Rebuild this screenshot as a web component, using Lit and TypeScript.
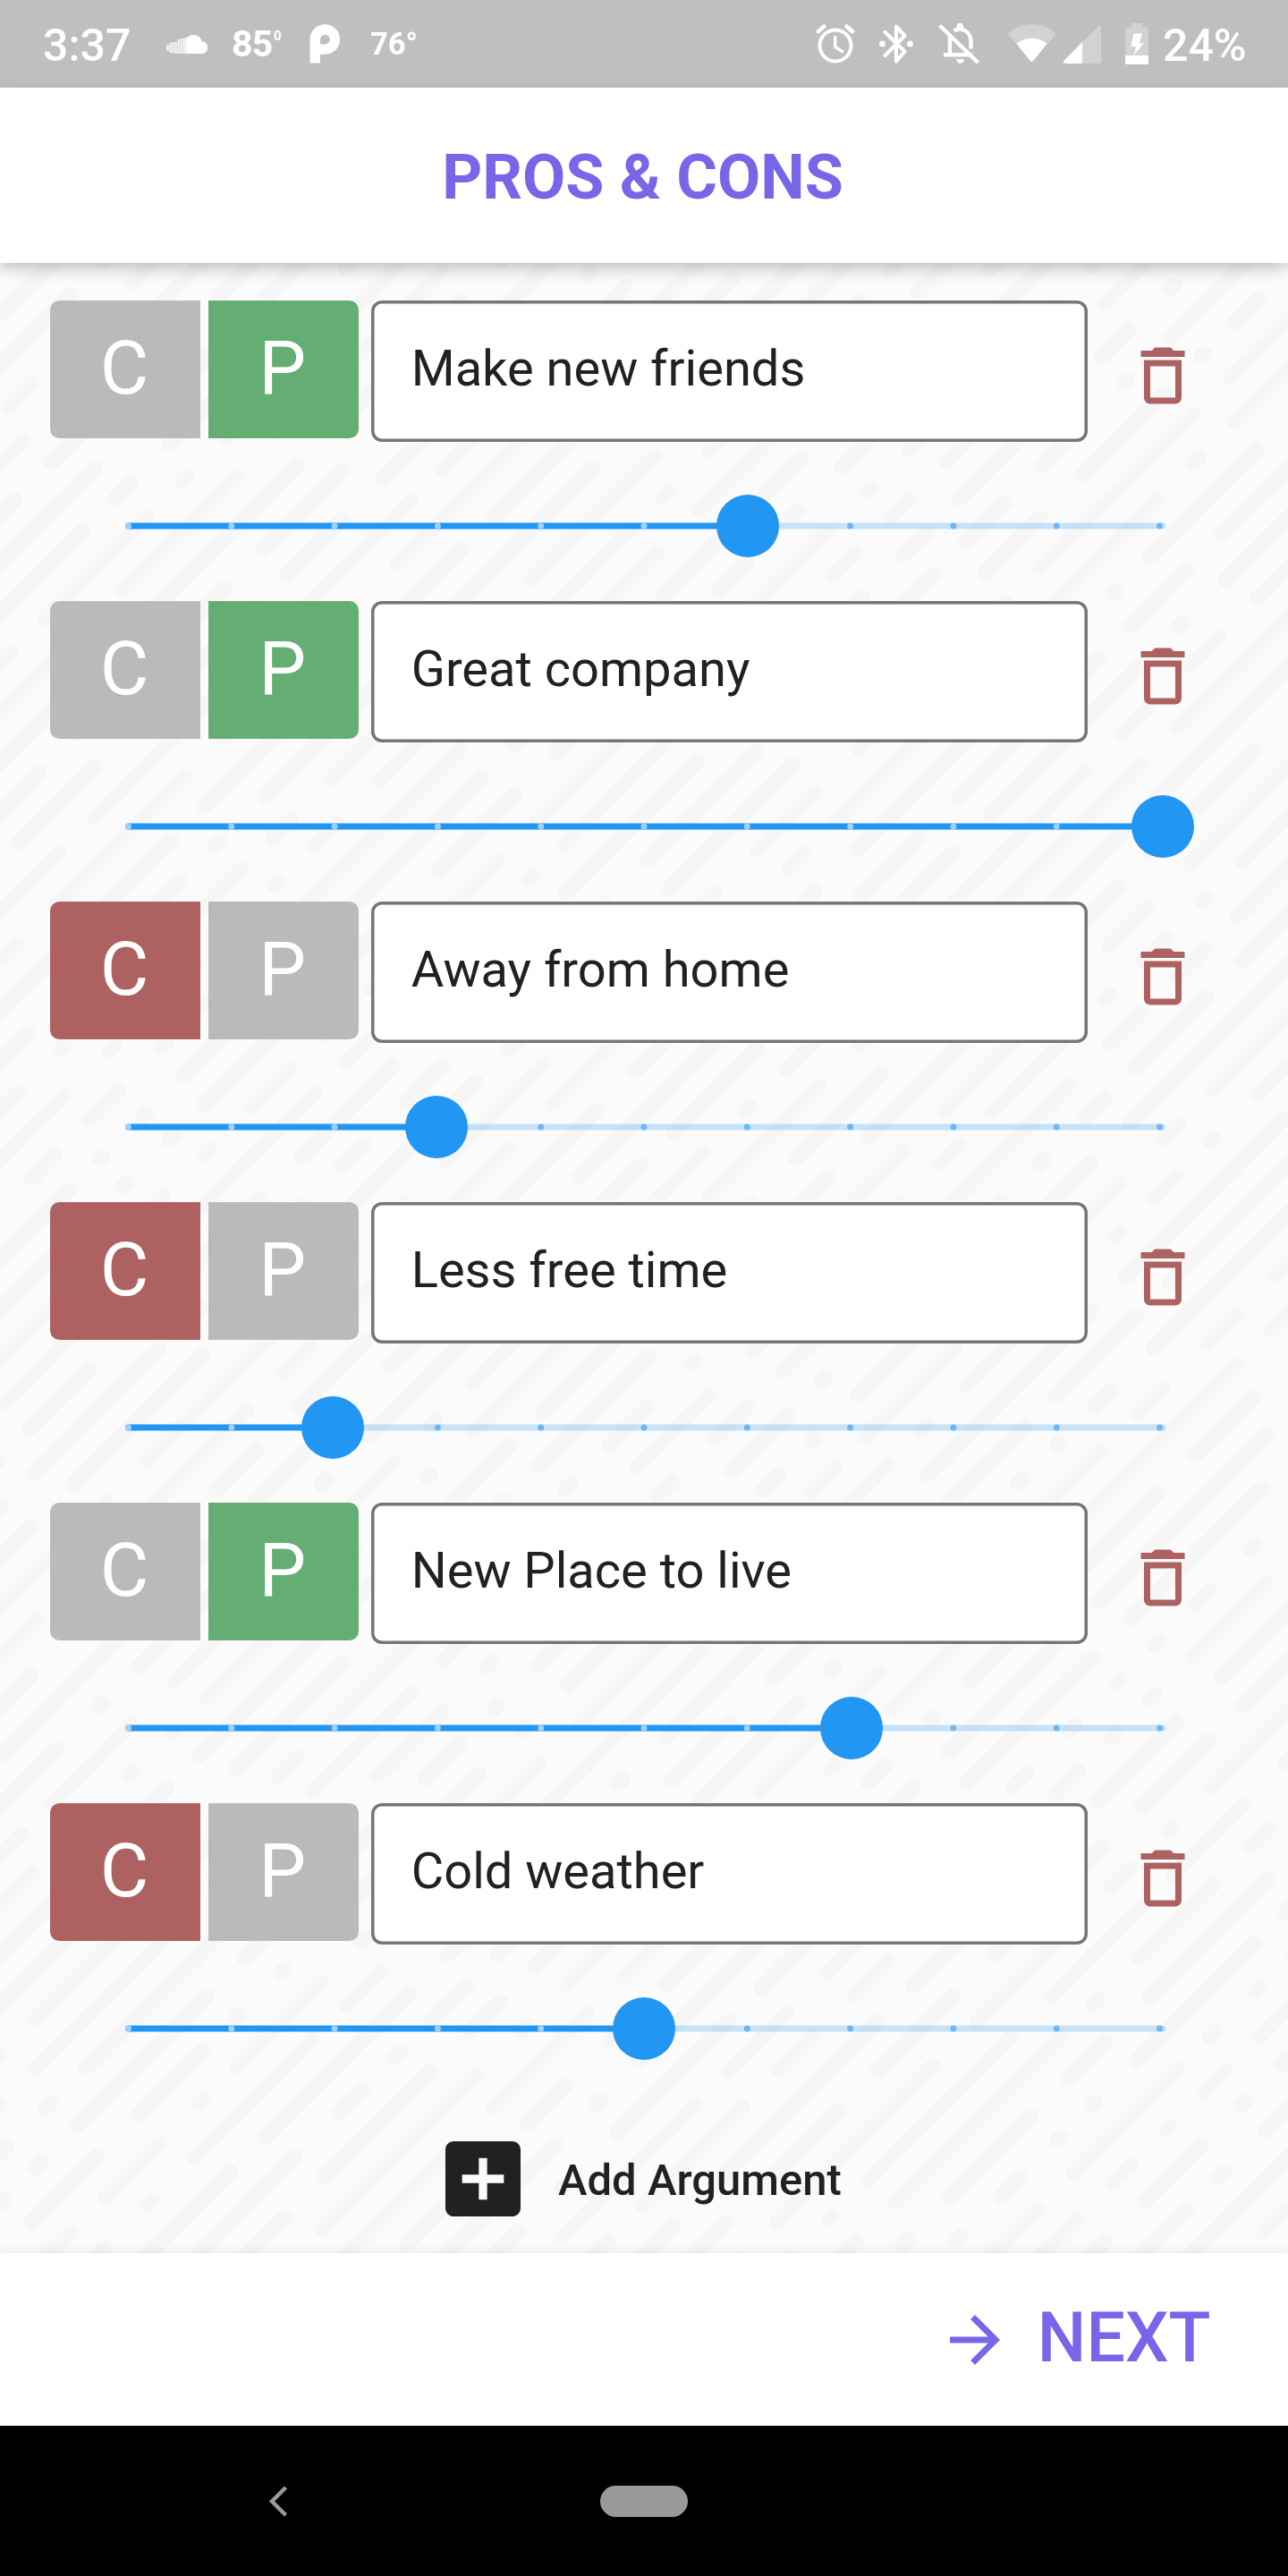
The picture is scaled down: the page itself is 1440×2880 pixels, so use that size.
import { LitElement, html, css, svg } from "lit";
import { customElement, property } from "lit/decorators.js";

interface Argument {
  text: string;
  pro: boolean;
  weight: number;
}

const ARGUMENTS: Argument[] = [
  { text: "Make new friends", pro: true, weight: 6 },
  { text: "Great company", pro: true, weight: 10 },
  { text: "Away from home", pro: false, weight: 3 },
  { text: "Less free time", pro: false, weight: 2 },
  { text: "New Place to live", pro: true, weight: 7 },
  { text: "Cold weather", pro: false, weight: 5 },
];

/** Diagonal dashes on evenly spaced 45 degree lines, stable between renders. */
function buildDashes(width: number, height: number) {
  let seed = 20481;
  const rand = () => {
    seed = (seed * 1103515245 + 12345) % 2147483648;
    return seed / 2147483648;
  };
  const out: string[] = [];
  for (let c = 3; c < width + height; c += 55.55) {
    let x = Math.max(-40, c - height - 40) - rand() * 120;
    const end = Math.min(width + 20, c + 20);
    while (x < end) {
      const r = rand();
      const run = r < 0.25 ? 3 + rand() * 4 : r < 0.45 ? 15 + rand() * 30 : 60 + rand() * 130;
      const y = c - x;
      out.push(`M${x.toFixed(1)} ${y.toFixed(1)}l${run.toFixed(1)} ${(-run).toFixed(1)}`);
      x += run + 34 + rand() * 16;
    }
  }
  return out.join("");
}

const DASHES = buildDashes(1440, 2225);

@customElement("status-bar")
export class StatusBar extends LitElement {
  static styles = css`
    :host {
      display: flex;
      align-items: center;
      justify-content: space-between;
      box-sizing: border-box;
      height: 98px;
      padding: 0 48px;
      background: #bfbfbf;
      color: #fff;
      font-weight: 500;
    }
    .side { display: flex; align-items: center; height: 98px; }
    svg { display: block; flex: none; }
    .clock { width: 137px; font-size: 50px; padding-top: 3px; }
    .temp { display: flex; align-items: flex-start; width: 87px; font-size: 41px; font-weight: 700; line-height: 48px; letter-spacing: -1px; margin-left: 26px; }
    .deg { font-size: 15px; line-height: 18px; padding-top: 6px; margin-left: 2px; }
    .small { font-size: 34.5px; font-weight: 700; margin-left: 33px; }
    .alarm { margin-right: 27px; }
    .bt { margin-right: 27px; }
    .bell { margin-right: 31px; }
    .wifi { margin-right: 8px; }
    .signal { margin-right: 27px; }
    .battery { margin-right: 16px; }
    .percent { width: 92px; font-size: 50px; padding-top: 3px; white-space: nowrap; }
  `;
  render() {
    return html`
      <div class="side">
        <span class="clock">3:37</span>
        <svg width="48" height="24" viewBox="185 38 48 24" fill="#fff">
          <path d="M210 61V43c2-2 5-3.500 8-3 5 .5 8.500 4 9 9 9-1 7 12 0 12z" transform="translate(-1)"/>
          <circle cx="225.500" cy="54" r="6.800"/>
          <path d="M187.500 51v7M190.500 49v11M193.500 48v12.500M196.500 48v13M199.500 45v16M202.500 44v17M205.500 44v17M208 43v18" stroke="#fff" stroke-width="2.300" opacity=".85"/>
        </svg>
        <span class="temp">85<span class="deg">0</span></span>
        <svg width="35" height="44" viewBox="346 28 35 44">
          <path fill="#fff" fill-rule="evenodd" d="M346.500 71.500V45a16.800 16.800 0 1 1 16.800 16.800h-5.300v9.700zM358 50.500h5.500a5.400 5.400 0 1 0-5.500-5.500z"/>
        </svg>
        <span class="small">76°</span>
      </div>
      <div class="side">
        <svg class="alarm" width="44" height="46" viewBox="912 26 44 46" fill="none" stroke="#fff" stroke-linecap="round">
          <circle cx="934" cy="51" r="17.500" stroke-width="4"/>
          <path d="M933.700 41.500v11l8 5" stroke-width="3.300" stroke-linejoin="round"/>
          <path d="M914.800 35.200l6.500-5.700M953 35.200l-6.500-5.700" stroke-width="4.500"/>
        </svg>
        <svg class="bt" width="39" height="46" viewBox="983 26 39 46" fill="none" stroke="#fff" stroke-width="4.200" stroke-linejoin="round" stroke-linecap="round">
          <path d="M989.500 36l22 21.500-9.500 11v-39l9.500 10.500-22 22"/>
          <circle cx="986.500" cy="49" r="3.400" fill="#fff" stroke="none"/>
          <circle cx="1017.500" cy="49" r="3.400" fill="#fff" stroke="none"/>
        </svg>
        <svg class="bell" width="47" height="48" viewBox="1049 26 47 48">
          <g fill="none" stroke="#fff" stroke-width="4.400">
            <path d="M1062 42v20M1055 62.300h32M1066.500 35.500c9-5 19 1 19 12v8"/>
            <path d="M1050.500 29.500L1093.500 71"/>
          </g>
          <path fill="#fff" d="M1069.500 34v-3.500a3.800 3.800 0 0 1 7.600 0V34zM1069 67h9c-.8 6.500-8.200 6.500-9 0z"/>
        </svg>
        <svg class="wifi" width="54" height="46" viewBox="1126 26 54 46">
          <path fill="#fff" opacity=".3" d="M1126.500 37c15-13.500 37.500-13.500 52.500 0 0 1 0 2-.7 3L1170 49.500c-10-8.800-24-8.800-34 0L1127 40c-.6-1-.8-2-.5-3z"/>
          <path fill="#fff" d="M1135.500 49c10-8.800 24-8.800 34 0L1154 68.300c-.8.900-2.200.9-3 0z"/>
        </svg>
        <svg class="signal" width="42" height="46" viewBox="1188 26 42 46">
          <path fill="#fff" opacity=".3" d="M1209 47l18-17.500c1.500-1.200 3-.5 3 1.500v38c0 1.200-.8 2-2 2h-19z"/>
          <path fill="#fff" d="M1209 47v24h-19c-2 0-2.700-1.800-1.500-3.200z"/>
        </svg>
        <svg class="battery" width="26" height="46" viewBox="1257 26 26 46">
          <path fill="#fff" opacity=".3" d="M1264 26h12v4.500h5c1.200 0 2 .8 2 2V62h-26V32.500c0-1.200.8-2 2-2h5z"/>
          <path fill="#fff" d="M1257 62h26v8c0 1.200-.8 2-2 2h-22c-1.200 0-2-.8-2-2zM1266.500 37.500h9.500l-3 11h4.500L1266.500 62l2.500-10h-5.500z"/>
        </svg>
        <span class="percent">24%</span>
      </div>
    `;
  }
}

@customElement("weight-slider")
export class WeightSlider extends LitElement {
  @property({ type: Number }) value = 0;

  static styles = css`
    :host { display: block; height: 84px; }
    svg { display: block; }
  `;
  render() {
    const thumb = 40 + this.value * 116;
    const ticks = Array.from({ length: 11 }, (_, i) => 43.5 + i * 115.3);
    return html`<svg width="1240" height="84" viewBox="0 0 1240 84">
      <rect x="${thumb}" y="38.500" width="${Math.max(0, 1203.5 - thumb)}" height="7" rx="3.500" fill="#2196f3" fill-opacity=".24"/>
      <rect x="43.500" y="38.500" width="${thumb - 43.5}" height="7" fill="#2196f3"/>
      <path d="M43.500 38.500a3.500 3.500 0 0 0 0 7z" fill="#2196f3"/>
      ${ticks.map((x) => svg`<circle cx="${x}" cy="42" r="3.500" fill="${x < thumb ? "#9ed0fa" : "#6cb8f7"}"/>`)}
      <circle cx="${thumb}" cy="42" r="35" fill="#2196f3"/>
    </svg>`;
  }
}

@customElement("argument-row")
export class ArgumentRow extends LitElement {
  @property({ attribute: false }) item!: Argument;

  static styles = css`
    :host { display: block; height: 336px; }
    .line { display: flex; align-items: flex-start; height: 158px; padding-left: 56px; }
    .choice {
      display: flex;
      align-items: center;
      justify-content: center;
      box-sizing: border-box;
      width: 168px;
      height: 154px;
      padding: 0 2px 3px 0;
      background: #bababa;
      color: #fff;
      font-size: 84px;
    }
    .con { border-radius: 10.5px 0 0 10.5px; margin-right: 8.75px; }
    .pro { border-radius: 0 10.5px 10.5px 0; margin-right: 14px; }
    .con.on { background: #ad6261; }
    .pro.on { background: #64ae74; }
    .field {
      display: flex;
      align-items: center;
      box-sizing: border-box;
      width: 801.5px;
      height: 157.5px;
      padding: 0 44px 6px 45px;
      border-radius: 12px;
      background: #fff;
      box-shadow: inset 0 0 0 3.5px #757575;
      color: #212121;
      font-size: 56px;
      white-space: nowrap;
    }
    .trash { display: block; margin: 42px 0 0 41.75px; }
    weight-slider { margin: 52px 0 0 100px; }
  `;
  render() {
    const { text, pro, weight } = this.item;
    return html`
      <div class="line">
        <div class="choice con ${pro ? "" : "on"}">C</div>
        <div class="choice pro ${pro ? "on" : ""}">P</div>
        <div class="field">${text}</div>
        <svg class="trash" width="84" height="84" viewBox="0 0 24 24" fill="#ad6261">
          <path d="M6 19c0 1.100.9 2 2 2h8c1.100 0 2-.9 2-2V7H6v12zM8 9h8v10H8V9zm7.500-5l-1-1h-5l-1 1H5v2h14V4z"/>
        </svg>
      </div>
      <weight-slider .value=${weight}></weight-slider>
    `;
  }
}

@customElement("app-root")
export class AppRoot extends LitElement {
  static styles = css`
    :host {
      display: flex;
      flex-direction: column;
      width: 1440px;
      height: 2880px;
      overflow: hidden;
      background: #fbfbfb;
      font-family: Roboto, "Noto Sans", sans-serif;
    }
    .header {
      display: flex;
      align-items: center;
      justify-content: center;
      box-sizing: border-box;
      height: 196px;
      padding: 4px 3px 0 0;
      background: #fff;
      box-shadow: 0 7px 14px -3px rgba(0, 0, 0, .16), 0 14px 17px rgba(0, 0, 0, .04), 0 3px 22px rgba(0, 0, 0, .07);
      color: #7766e8;
      font-size: 70px;
      font-weight: 700;
      z-index: 1;
    }
    .content {
      position: relative;
      box-sizing: border-box;
      height: 2225px;
      padding-top: 42px;
      background: #fbfbfb;
    }
    .pattern { position: absolute; inset: 0; }
    .list { position: relative; }
    .add {
      display: flex;
      align-items: center;
      gap: 28px;
      height: 112px;
      margin-top: 28px;
      padding-left: 484px;
      color: #212121;
      font-size: 49px;
      font-weight: 500;
    }
    .label { padding-top: 2px; }
    .footer {
      display: flex;
      align-items: center;
      justify-content: flex-end;
      gap: 28px;
      height: 193px;
      padding-right: 86.5px;
      background: #fff;
      box-shadow: 0 -2px 12px rgba(0, 0, 0, .07);
      color: #7766e8;
      font-size: 77px;
      font-weight: 500;
      z-index: 1;
    }
    .next { margin-top: -4px; }
    .nav {
      display: flex;
      align-items: center;
      height: 168px;
      background: #000;
      z-index: 1;
    }
    .nav svg { margin-left: 300px; }
    .home { width: 98px; height: 35px; margin-left: 349px; border-radius: 17.5px; background: #999; }
    svg { display: block; }
  `;
  render() {
    return html`
      <status-bar></status-bar>
      <div class="header">PROS &amp; CONS</div>
      <div class="content">
        <svg class="pattern" width="1440" height="2225" viewBox="0 0 1440 2225">
          <path d="${DASHES}" fill="none" stroke="#f6f6f6" stroke-width="17" stroke-linecap="round"/>
        </svg>
        <div class="list">
          ${ARGUMENTS.map((a) => html`<argument-row .item=${a}></argument-row>`)}
          <div class="add">
            <svg width="112" height="112" viewBox="0 0 24 24" fill="#212121">
              <path d="M19 3H5c-1.110 0-2 .9-2 2v14c0 1.100.890 2 2 2h14c1.100 0 2-.9 2-2V5c0-1.100-.9-2-2-2zm-2 10h-4v4h-2v-4H7v-2h4V7h2v4h4v2z"/>
            </svg>
            <span class="label">Add Argument</span>
          </div>
        </div>
      </div>
      <div class="footer">
        <svg width="84" height="84" viewBox="0 0 24 24" fill="#7766e8">
          <path d="M12 4l-1.410 1.410L16.170 11H4v2h12.170l-5.580 5.590L12 20l8-8z"/>
        </svg>
        <span class="next">NEXT</span>
      </div>
      <div class="nav">
        <svg width="22" height="35" viewBox="0 0 22 35" fill="none" stroke="#999" stroke-width="4.500">
          <path d="M19.500 2L4 17.500 19.500 33"/>
        </svg>
        <div class="home"></div>
      </div>
    `;
  }
}
